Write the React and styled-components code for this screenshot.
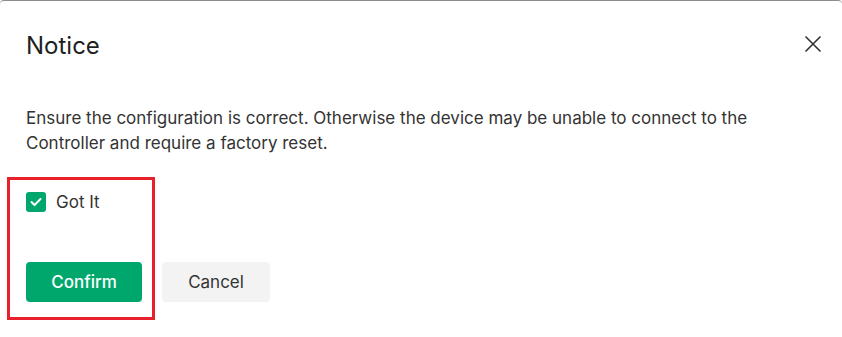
import React, { useState } from 'react';
import styled, { createGlobalStyle } from 'styled-components';

const GlobalStyle = createGlobalStyle`
  html, body {
    margin: 0;
    padding: 0;
    background: #ffffff;
  }
  body {
    font-family: Inter, "Noto Sans", "Liberation Sans", sans-serif;
    color: #333333;
  }
`;

const Dialog = styled.div`
  position: relative;
  box-sizing: border-box;
  width: 842px;
  height: 337px;
  background: #fff;
  border-top: 1px solid #8c8c8c;
  border-radius: 4px 4px 0 0;
  padding: 0 26px;
`;

const Header = styled.div`
  display: flex;
  align-items: center;
  justify-content: space-between;
  height: 88px;
`;

const Title = styled.h2`
  margin: 0;
  font-size: 24px;
  font-weight: 400;
  color: #1f1f1f;
`;

const CloseButton = styled.button`
  display: flex;
  align-items: center;
  justify-content: center;
  width: 24px;
  height: 24px;
  margin-right: -9px;
  margin-top: -2px;
  padding: 0;
  border: none;
  background: none;
  color: #333;
  cursor: pointer;
`;

const Message = styled.p`
  margin: 17px 0 0;
  font-size: 17px;
  line-height: 25px;
  color: #333;
`;

const CheckRow = styled.label`
  display: flex;
  align-items: center;
  gap: 10px;
  margin-top: 36px;
  font-size: 17px;
  color: #333;
  cursor: pointer;
`;

const Box = styled.span`
  display: flex;
  align-items: center;
  justify-content: center;
  width: 20px;
  height: 20px;
  border-radius: 3px;
  background: ${p => (p.$checked ? '#00a76d' : '#fff')};
  border: ${p => (p.$checked ? 'none' : '1px solid #bbb')};
  box-sizing: border-box;
`;

const Actions = styled.div`
  display: flex;
  gap: 20px;
  margin-top: 50px;
`;

const Button = styled.button`
  height: 40px;
  padding: 0;
  width: ${p => p.$width}px;
  border: none;
  border-radius: 4px;
  font-family: inherit;
  font-size: 17px;
  font-weight: ${p => (p.$primary ? 500 : 400)};
  background: ${p => (p.$primary ? '#00a76d' : '#f3f3f3')};
  color: ${p => (p.$primary ? '#fff' : '#333')};
  cursor: pointer;
`;

const Highlight = styled.div`
  position: absolute;
  left: 7px;
  top: 176px;
  width: 148px;
  height: 143px;
  box-sizing: border-box;
  border: 3px solid #e8202b;
  pointer-events: none;
`;

export default function App() {
  const [checked, setChecked] = useState(true);
  return (
    <>
      <GlobalStyle />
      <Dialog>
        <Header>
          <Title>Notice</Title>
          <CloseButton aria-label="Close">
            <svg width="18" height="18" viewBox="0 0 18 18" fill="none">
              <path d="M1.5 1.5L16.5 16.5M16.5 1.5L1.5 16.5" stroke="currentColor" strokeWidth="1.6" />
            </svg>
          </CloseButton>
        </Header>
        <Message>
          Ensure the configuration is correct. Otherwise the device may be unable to connect to the
          Controller and require a factory reset.
        </Message>
        <CheckRow onClick={() => setChecked(!checked)}>
          <Box $checked={checked}>
            {checked && (
              <svg width="12" height="10" viewBox="0 0 12 10" fill="none">
                <path d="M1.5 5L4.5 8L10.5 2" stroke="#fff" strokeWidth="2" strokeLinecap="round" strokeLinejoin="round" />
              </svg>
            )}
          </Box>
          Got It
        </CheckRow>
        <Actions>
          <Button $primary $width={116}>Confirm</Button>
          <Button $width={108}>Cancel</Button>
        </Actions>
        <Highlight />
      </Dialog>
    </>
  );
}
